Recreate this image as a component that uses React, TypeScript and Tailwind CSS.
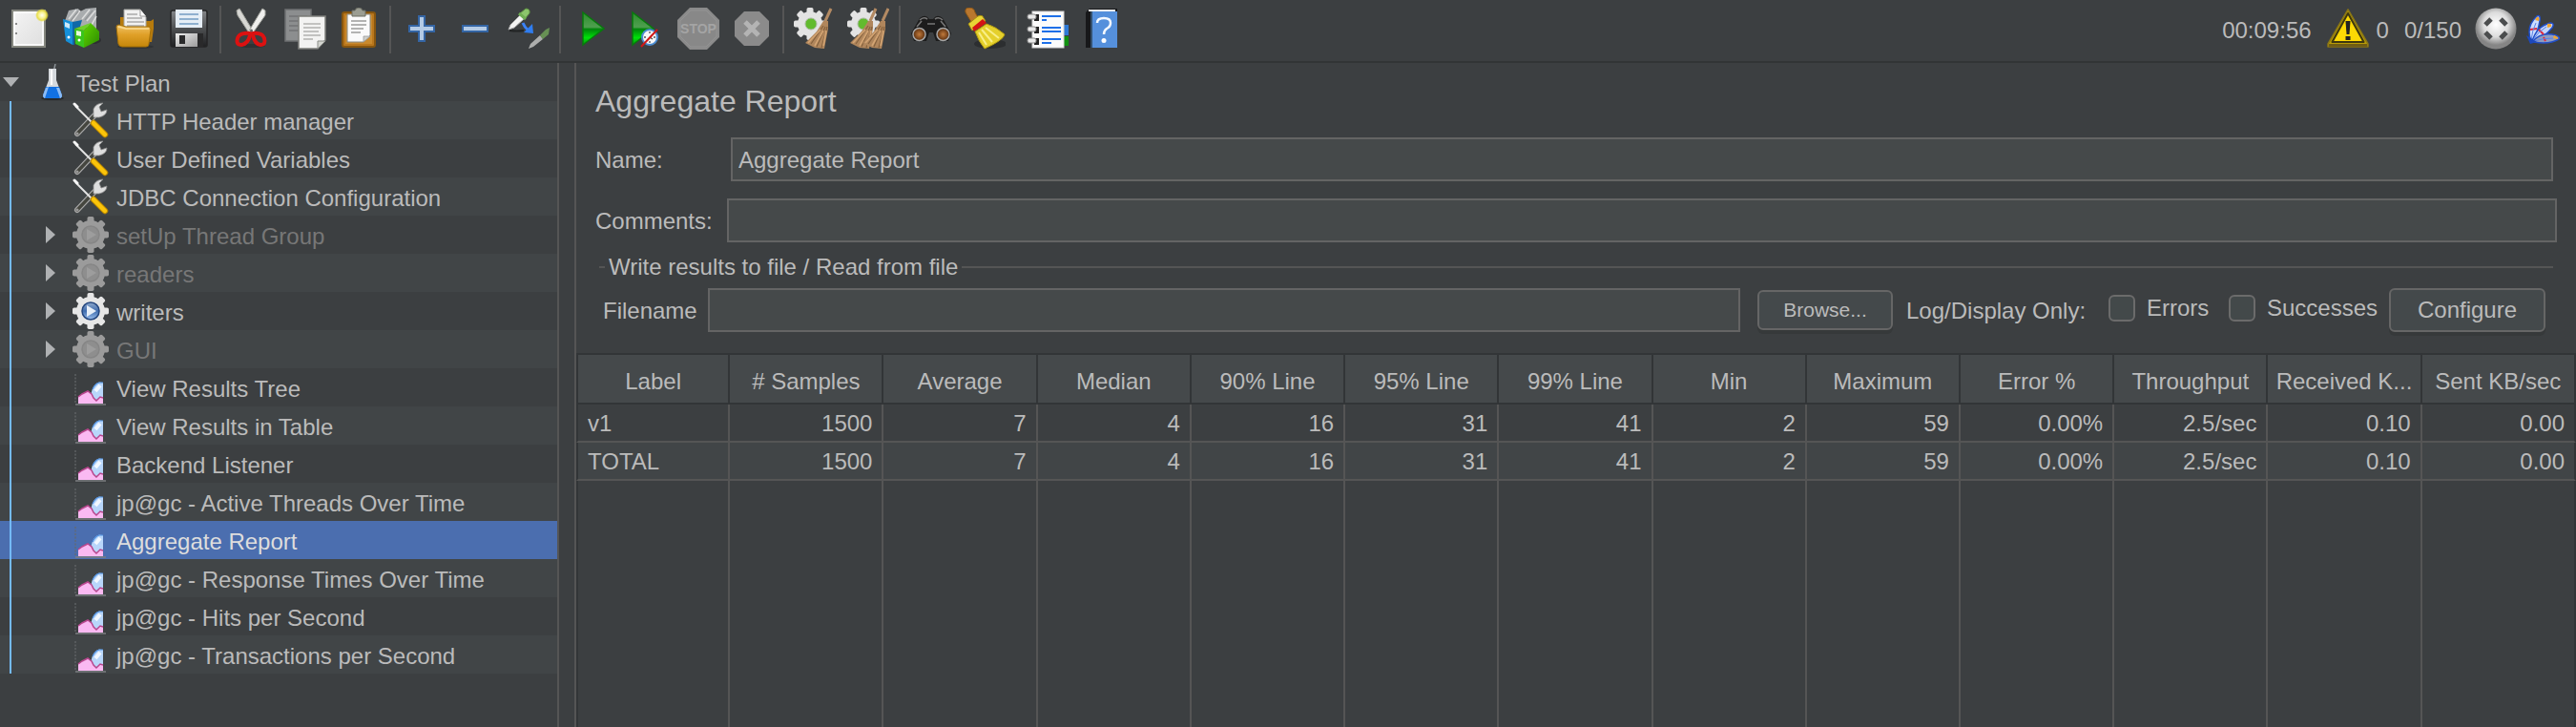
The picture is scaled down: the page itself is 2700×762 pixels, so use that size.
import React from "react";

function Svg({ children, className = "size-11", box = "0 0 44 44" }: { children: React.ReactNode; className?: string; box?: string }) {
  return (
    <svg viewBox={box} className={className} aria-hidden="true">
      {children}
    </svg>
  );
}

/* ---------- toolbar icons, drawn on a 44 unit grid ---------- */

function NewIcon() {
  return (
    <Svg>
      <defs>
        <linearGradient id="page" x1="0" y1="0" x2="1" y2="1">
          <stop offset="0" stopColor="#f4f4f4" />
          <stop offset="1" stopColor="#dedede" />
        </linearGradient>
        <radialGradient id="glow">
          <stop offset="0" stopColor="#fffff0" />
          <stop offset=".5" stopColor="#f6f08a" />
          <stop offset=".75" stopColor="#e6dc3c" stopOpacity=".9" />
          <stop offset="1" stopColor="#e6dc3c" stopOpacity="0" />
        </radialGradient>
      </defs>
      <rect x="5" y="3" width="34" height="38" fill="url(#page)" stroke="#85877f" strokeWidth="2" />
      <rect x="7" y="5" width="30" height="34" fill="none" stroke="#fff" strokeWidth="1.5" />
      <rect x="8" y="16" width="2" height="2" fill="#888" />
      <rect x="8" y="26" width="2" height="2" fill="#888" />
      <circle cx="36" cy="8" r="7" fill="url(#glow)" />
    </Svg>
  );
}

function TemplatesIcon() {
  return (
    <Svg>
      <defs>
        <linearGradient id="grn" x1="0" y1="0" x2="1" y2="1">
          <stop offset="0" stopColor="#5fd400" />
          <stop offset="1" stopColor="#2c8a00" />
        </linearGradient>
      </defs>
      <ellipse cx="34" cy="34" rx="8" ry="4" fill="#2d2f31" />
      <path d="M4 14 L8 3 L18 1 L20 4 L26 1 L37 0 L37 22 L20 20 L6 18Z" fill="#a9acae" />
      <path d="M8 12 L16 2 M12 14 L20 3 M22 12 L30 2 M27 14 L36 3 M32 18 L37 9" stroke="#dcdcdc" strokeWidth="1.6" />
      <path d="M10 14 L18 4 M25 13 L33 3" stroke="#8e9194" strokeWidth="1.2" />
      <path d="M2 12 L12 15 V39 L5 35 Z" fill="#1590da" />
      <path d="M12 15 L22 13 L20 20 L14 22 V39 L12 39Z" fill="#0f68a8" />
      <path d="M4 15 L9 17 V22 L4 20Z" fill="#cbe8f9" />
      <circle cx="8" cy="31" r="1.5" fill="#fff" />
      <path d="M14 22 L24 24 V42 L15 38Z" fill="#39c51c" />
      <path d="M24 24 L31 16 L40 25 V34 L24 42Z" fill="url(#grn)" />
      <path d="M14 22 L20 20 L31 16 L24 24Z" fill="#6fd02a" />
      <path d="M16 24 L21 25 V30 L16 29Z" fill="#e4f9dd" />
      <circle cx="19" cy="34" r="1.5" fill="#fff" />
    </Svg>
  );
}

function OpenIcon() {
  return (
    <Svg>
      <defs>
        <linearGradient id="fold" x1="0" y1="0" x2="0" y2="1">
          <stop offset="0" stopColor="#f0c468" />
          <stop offset=".45" stopColor="#e0a028" />
          <stop offset="1" stopColor="#c4860a" />
        </linearGradient>
      </defs>
      <ellipse cx="22" cy="41" rx="19" ry="2" fill="#303335" />
      <path d="M6 10 H14 V14 H38 L41 12 V22 L39 36 H6Z" fill="#b67a0c" />
      <path d="M10 2 H27 L33 10 V24 H10Z" fill="#f1f1f1" stroke="#a5a5a2" />
      <path d="M27 2 V9 H33" fill="#fff" stroke="#999" />
      <path d="M13 7 H24 M13 11 H29 M13 15 H31 M13 19 H31" stroke="#aaa" strokeWidth="1.6" />
      <path d="M2 20 Q2 18 5 18 L12 20 H36 Q38 20 38 23 L36 38 Q36 41 33 41 H8 Q5 41 4 38Z" fill="url(#fold)" stroke="#a36f07" />
      <path d="M4 20 L12 22 H36" fill="none" stroke="#fbdc94" strokeWidth="1.5" />
    </Svg>
  );
}

function SaveIcon() {
  return (
    <Svg>
      <defs>
        <linearGradient id="flop" x1="0" y1="0" x2="0" y2="1">
          <stop offset="0" stopColor="#85878a" />
          <stop offset=".5" stopColor="#4e5052" />
          <stop offset="1" stopColor="#1f2022" />
        </linearGradient>
        <linearGradient id="metal" x1="0" y1="0" x2="1" y2="1">
          <stop offset="0" stopColor="#eee" />
          <stop offset="1" stopColor="#9c9c9c" />
        </linearGradient>
      </defs>
      <rect x="3" y="3" width="38" height="38" rx="2" fill="url(#flop)" stroke="#242526" strokeWidth="1.5" />
      <rect x="8" y="2" width="28" height="19" fill="#e6eef6" />
      <path d="M12 7 H32 M12 12 H32 M12 17 H32" stroke="#8fb0cf" strokeWidth="1.8" />
      <rect x="8" y="27" width="23" height="14" fill="url(#metal)" />
      <rect x="12" y="29" width="6" height="9" fill="#2a2a2b" />
      <rect x="31" y="27" width="6" height="14" fill="#29292a" />
    </Svg>
  );
}

function CutIcon() {
  return (
    <Svg>
      <ellipse cx="22" cy="40" rx="14" ry="2" fill="#2f3234" />
      <path d="M6 3 L9 1 L24 26 L20 28 L7 8Z" fill="#d7d7d4" stroke="#a0a29c" />
      <path d="M36 3 L33 1 L18 26 L22 28 L36 8Z" fill="#efefed" stroke="#a0a29c" />
      <path d="M20 27 Q9 26 7 32 Q5 39 11 39 Q18 38 20 29Z" fill="none" stroke="#dd1111" strokeWidth="4" />
      <path d="M23 27 Q33 26 35 32 Q37 39 31 39 Q25 38 23 29Z" fill="none" stroke="#dd1111" strokeWidth="4" />
      <circle cx="21.5" cy="24" r="1.5" fill="#666" />
    </Svg>
  );
}

function CopyIcon() {
  return (
    <Svg>
      <rect x="1" y="2" width="27" height="33" fill="#8c8e8f" stroke="#6e7072" strokeWidth="1.5" />
      <path d="M5 9 H24 M5 14 H24 M5 19 H24 M5 24 H20" stroke="#717375" strokeWidth="1.6" />
      <path d="M15 9 H43 V34 L35 43 H15Z" fill="#f3f3f2" stroke="#7d7f7b" strokeWidth="1.5" />
      <path d="M35 43 V35 H43Z" fill="#d2d4cf" stroke="#8b8d88" />
      <path d="M20 17 H38 M20 21 H38 M20 25 H36 M20 29 H38 M20 33 H30" stroke="#b2b2b0" strokeWidth="1.6" />
    </Svg>
  );
}

function PasteIcon() {
  return (
    <Svg>
      <rect x="5" y="5" width="34" height="36" rx="2" fill="#b9761c" stroke="#87560f" strokeWidth="2" />
      <rect x="8" y="8" width="28" height="30" fill="#c98a2e" />
      <path d="M10 7 H34 V29 L27 36 H10Z" fill="#fafafa" stroke="#888a85" />
      <path d="M27 36 V30 H34Z" fill="#cfd1cc" stroke="#999" strokeWidth=".8" />
      <path d="M14 14 H30 M14 18 H30 M14 22 H27 M14 26 H24" stroke="#9c9c9a" strokeWidth="1.6" />
      <path d="M15 3 H18 Q19 0 22 0 Q25 0 26 3 H29 V9 H15Z" fill="#9b9d92" stroke="#6a6c62" />
    </Svg>
  );
}

function PlusIcon() {
  return (
    <Svg>
      <path d="M19 9 H25 V19 H35 V25 H25 V35 H19 V25 H9 V19 H19Z" fill="#b4cbe6" stroke="#3465a4" strokeWidth="2" />
    </Svg>
  );
}

function MinusIcon() {
  return (
    <Svg>
      <rect x="9" y="19" width="26" height="6" fill="#b4cbe6" stroke="#3465a4" strokeWidth="2" />
    </Svg>
  );
}

function ToggleIcon() {
  return (
    <Svg>
      <path d="M2 24 Q10 25 17 24" stroke="#222425" strokeWidth="2" fill="none" />
      <path d="M1 23 L3 18 L13 8 L17 12 L7 21Z" fill="#f3f3f3" stroke="#a7a7a7" />
      <path d="M13 6 L19 1 Q24 1 23 6 L18 12Z" fill="#8cc56c" stroke="#5a8a40" />
      <path d="M12 6 L19 12" stroke="#6fae52" strokeWidth="3" />
      <path d="M16 16 Q18 21 22 24" fill="none" stroke="#3b82f6" strokeWidth="3" />
      <path d="M26 17 L27 27 L17 26Z" fill="#2f7df0" />
      <path d="M22 43 L24 38 L34 29 L37 33 L27 41Z" fill="#b9bab9" opacity=".9" />
      <path d="M34 29 L40 23 L44 21 L43 28 L37 33Z" fill="#6f9f58" opacity=".85" />
    </Svg>
  );
}

function PlayShape() {
  return (
    <>
      <defs>
        <linearGradient id="play" x1="0" y1="0" x2="0" y2="1">
          <stop offset="0" stopColor="#2c8d2c" />
          <stop offset=".45" stopColor="#4f9f4f" />
          <stop offset=".52" stopColor="#00850a" />
          <stop offset=".78" stopColor="#00e00a" />
          <stop offset="1" stopColor="#029a08" />
        </linearGradient>
      </defs>
      <path d="M13 5 L35 22 L13 39Z" fill="url(#play)" stroke="#077a0c" strokeWidth="1.5" />
    </>
  );
}

function PlayIcon() {
  return (
    <Svg>
      <PlayShape />
    </Svg>
  );
}

function PlayNoTimersIcon() {
  return (
    <Svg>
      <g transform="translate(-4 0)">
        <PlayShape />
      </g>
      <circle cx="27" cy="31" r="8" fill="#f7f7f7" stroke="#4a8bd0" strokeWidth="2" />
      <path d="M27 25 V27 M27 35 V37 M21 31 H23 M31 31 H33 M27 31 L30 33" stroke="#555" strokeWidth="1.3" />
      <path d="M18 41 L35 23" stroke="#d01818" strokeWidth="2" />
    </Svg>
  );
}

function StopIcon() {
  return (
    <Svg>
      <path d="M13 0 H31 L44 13 V31 L31 44 H13 L0 31 V13Z" fill="#8b8b8b" />
      <path d="M14 3 H30 L41 14 V30 L30 41 H14 L3 30 V14Z" fill="#888" stroke="#929292" />
      <text x="22" y="27" textAnchor="middle" fontFamily="Liberation Sans Narrow, Liberation Sans, sans-serif" fontWeight="bold" fontSize="14" fill="#a4a4a4">
        STOP
      </text>
    </Svg>
  );
}

function ShutdownIcon() {
  return (
    <Svg>
      <path d="M14 4 H30 L40 14 V30 L30 40 H14 L4 30 V14Z" fill="#8b8b8b" />
      <path d="M15 15 L29 29 M29 15 L15 29" stroke="#b4b4b4" strokeWidth="5" />
    </Svg>
  );
}

function gearTeeth(cx: number, cy: number, r: number, w: number) {
  return [0, 45, 90, 135].map((a) => (
    <rect key={a} x={cx - w / 2} y={cy - r} width={w} height={r * 2} rx={w / 4} transform={`rotate(${a} ${cx} ${cy})`} />
  ));
}

function BroomHead({ dx = 0 }: { dx?: number }) {
  return (
    <g transform={`translate(${dx} 0)`}>
      <path d="M39 1 L33 14" stroke="#b38a63" strokeWidth="3" />
      <path d="M31 14 L36 14 L36 22 L32 43 L22 42 L12 37 L24 25Z" fill="#b0865c" />
      <path d="M31 19 L18 38 M33 20 L24 41 M35 20 L29 42" stroke="#86623e" strokeWidth="1.2" />
      <path d="M28 23 L15 37 M31 24 L22 40 M34 24 L31 40" stroke="#d3a473" strokeWidth="1.6" />
    </g>
  );
}

function ClearIcon() {
  return (
    <Svg>
      <g fill="#e3e3e3">
        {gearTeeth(17, 17, 17, 7)}
        <circle cx="17" cy="17" r="13" />
      </g>
      <circle cx="18" cy="17" r="6" fill="#62bb2e" stroke="#a9b8a0" />
      <BroomHead />
    </Svg>
  );
}

function ClearAllIcon() {
  return (
    <Svg>
      <g fill="#e3e3e3">
        {gearTeeth(17, 17, 17, 7)}
        <circle cx="17" cy="17" r="13" />
      </g>
      <circle cx="17" cy="17" r="6" fill="#62bb2e" stroke="#a9b8a0" />
      <BroomHead dx={-9} />
      <BroomHead dx={4} />
    </Svg>
  );
}

function BinocularsIcon() {
  return (
    <Svg>
      <defs>
        <radialGradient id="lens">
          <stop offset="0" stopColor="#c07a3c" />
          <stop offset="1" stopColor="#5a2d0c" />
        </radialGradient>
      </defs>
      <path d="M1 27 L10 11 Q16 6 20 12 H24 Q28 6 34 11 L43 27 L40 35 H27 L24 26 H20 L17 35 H4Z" fill="#1c1c1c" />
      <path d="M10 13 Q14 9 18 12 M26 12 Q30 9 34 13 M18 17 H26 M7 20 L12 14 M37 20 L32 14" stroke="#777" strokeWidth="1.6" fill="none" />
      <circle cx="9.5" cy="28" r="6.5" fill="url(#lens)" stroke="#a5a5a5" strokeWidth="1.5" />
      <circle cx="34.5" cy="28" r="6.5" fill="url(#lens)" stroke="#a5a5a5" strokeWidth="1.5" />
    </Svg>
  );
}

function BroomIcon() {
  return (
    <Svg>
      <ellipse cx="28" cy="38" rx="17" ry="5" fill="#2c2e30" />
      <path d="M2 5 Q1 0 6 0 Q11 0 12 5 L16 12 L8 15Z" fill="#b9772e" stroke="#8d5715" />
      <path d="M5 17 L15 9 Q20 7 21 11 L23 14 L9 24Z" fill="#e8d435" stroke="#a58f10" />
      <path d="M9 21 L20 12 L24 16 L11 25Z" fill="#d41414" />
      <path d="M12 25 L24 17 Q34 20 43 28 Q42 34 22 43 Q16 36 12 25Z" fill="#e5d02c" stroke="#ae980f" />
      <path d="M16 26 L24 39 M19 23 L30 36 M23 21 L37 32" stroke="#f8ee88" strokeWidth="2" />
    </Svg>
  );
}

function LogIcon() {
  return (
    <Svg>
      <rect x="36" y="18" width="8" height="11" fill="#2f7ad6" />
      <rect x="36" y="30" width="8" height="10" fill="#109010" />
      <rect x="6" y="4" width="33" height="38" fill="#fbfbfb" stroke="#d5d5d5" />
      <path d="M16 9 H36 M16 13 H21 M16 21 H36 M16 25 H36 M16 33 H36 M16 37 H26" stroke="#1d6fe8" strokeWidth="2" />
      {[7, 20, 32].map((y) => (
        <g key={y}>
          <rect x="8" y={y} width="5" height="7" fill="#222" />
          <rect x="1" y={y} width="9" height="5" rx="2" fill="#e9e9e9" stroke="#8a8a8a" />
        </g>
      ))}
    </Svg>
  );
}

function HelpIcon() {
  return (
    <Svg>
      <path d="M6 5 L10 1 H39 V42 H6Z" fill="#17181a" />
      <path d="M9 3 H37" stroke="#f0f0f0" strokeWidth="2" />
      <rect x="12" y="4" width="27" height="38" fill="#5590dc" />
      <path d="M12 4 V42" stroke="#34516f" strokeWidth="2" />
      <path d="M18 16 Q18 11 25 11 Q32 11 32 16 Q32 20 28 22 Q25 24 25 28" fill="none" stroke="#f3f8ff" strokeWidth="2.5" />
      <circle cx="25" cy="34.5" r="2.5" fill="#fff" />
    </Svg>
  );
}

function WarningIcon() {
  return (
    <Svg>
      <path d="M22 2 L43 38 V41 H1 V38Z" fill="#b89b06" stroke="#8a7614" strokeWidth="1.5" strokeLinejoin="round" />
      <path d="M22 6 L38.5 36 H5.5Z" fill="#fcd904" stroke="#3d370f" strokeWidth="2" strokeLinejoin="round" />
      <path d="M2 39.5 H42" stroke="#6f5c14" strokeWidth="3" />
      <path d="M19.5 14 H24.5 L23.5 28 H20.5Z" fill="#222" />
      <rect x="19.5" y="30" width="5" height="4" fill="#222" />
    </Svg>
  );
}

function ServerIcon() {
  return (
    <Svg>
      <defs>
        <radialGradient id="ball" cx=".5" cy=".4">
          <stop offset="0" stopColor="#fff" />
          <stop offset=".6" stopColor="#dcdcdc" />
          <stop offset="1" stopColor="#858585" />
        </radialGradient>
      </defs>
      <circle cx="22" cy="22" r="21.5" fill="url(#ball)" />
      <g stroke="#4b4d4e" strokeWidth="5">
        <path d="M11 18 L17 12 M33 18 L27 12 M11 26 L17 32 M33 26 L27 32" />
      </g>
    </Svg>
  );
}

function FeatherIcon() {
  return (
    <Svg className="h-11 w-10" box="0 0 40 44">
      <path d="M5 35 Q-1 20 11 9 Q15 7 14 14 Q12 26 6 35Z" fill="#ccdcff" stroke="#2350c8" strokeWidth="1.5" />
      <path d="M6 36 Q10 20 25 16 Q30 16 27 21 Q20 30 8 36Z" fill="#c4d5fb" stroke="#2350c8" strokeWidth="1.5" />
      <path d="M6 36 Q14 26 27 28 Q36 30 34 33 Q24 39 8 36Z" fill="#8f9cc0" stroke="#2350c8" strokeWidth="1.5" />
      <path d="M11 10 Q14 9 13 14 L9 13Z M22 17 Q27 16 26 20 L22 21Z M29 29 Q34 31 33 33 L28 32Z" fill="#f2a52c" />
      <path d="M4 23 L11 22 M13 23 L18 28 M18 31 L20 35" stroke="#e02a3c" strokeWidth="2" />
      <path d="M5 34 Q6 24 10 16 M7 34 Q12 25 21 20 M8 35 Q18 32 28 32" stroke="#5c83e8" fill="none" />
      <path d="M0 29 L11 36 L4 38Z" fill="#1d49be" />
    </Svg>
  );
}

/* ---------- tree icons, drawn on a 38 unit grid ---------- */

function FlaskIcon() {
  return (
    <Svg className="size-[38px]" box="0 0 38 38">
      <ellipse cx="19" cy="36" rx="12" ry="2" fill="#27292b" />
      <path d="M22 0 L20 9" stroke="#8b9196" strokeWidth="1.5" />
      <path d="M15 5 H23 V17 L29 33 Q29 36 26 36 H12 Q9 36 9 33 L15 17Z" fill="#d5d9dd" />
      <path d="M12 24 H26 L29 33 Q29 36 26 36 H12 Q9 36 9 33Z" fill="#1271e2" />
      <path d="M12 25 L9 33 Q9 35 11 36 L15 24Z M26 25 L29 33 Q29 35 27 36 L23 25Z" fill="#8dbcf4" />
      <path d="M18 6 V22" stroke="#fff" strokeWidth="2" />
    </Svg>
  );
}

function ToolsIcon() {
  return (
    <Svg className="size-[38px]" box="0 0 38 38">
      <path d="M5 33 L23 14" stroke="#a9a9a9" strokeWidth="6" strokeLinecap="round" />
      <path d="M5 33 L22 15" stroke="#45463f" strokeWidth="3.5" strokeLinecap="round" />
      <circle cx="5" cy="33" r="1.6" fill="#999" />
      <path d="M22 16 L22 7 Q25 1 32 1 L28 5 L30 10 L36 8 Q36 14 28 16Z" fill="#dedede" stroke="#8b8b8b" strokeWidth=".8" />
      <path d="M3 4 L20 21" stroke="#e4e4e4" strokeWidth="2" />
      <path d="M2 2 L5 5" stroke="#f6f6f6" strokeWidth="3" strokeLinecap="round" />
      <path d="M22 22 L34 34" stroke="#b88600" strokeWidth="6.5" strokeLinecap="round" />
      <path d="M22 22 L34 34" stroke="#fbc40a" strokeWidth="4.5" strokeLinecap="round" />
    </Svg>
  );
}

function GearIcon({ enabled }: { enabled: boolean }) {
  return (
    <Svg className="size-[38px]" box="0 0 38 38">
      <defs>
        <linearGradient id="hub" x1="0" y1="0" x2="0" y2="1">
          <stop offset="0" stopColor="#8fa9cc" />
          <stop offset=".5" stopColor="#3f6cae" />
          <stop offset="1" stopColor="#9cc0ee" />
        </linearGradient>
      </defs>
      <g fill={enabled ? "#e6e6e6" : "#9b9b9b"}>
        {gearTeeth(19, 19, 19, 7)}
        <circle cx="19" cy="19" r="15" />
      </g>
      <circle cx="19" cy="19" r="9" fill={enabled ? "url(#hub)" : "#8e8e8e"} stroke={enabled ? "#24467f" : "#868686"} strokeWidth="1.5" />
      <path d="M15 13 L25 19 L15 25Z" fill={enabled ? "#e6eef8" : "#9d9d9d"} />
    </Svg>
  );
}

function ChartIcon() {
  return (
    <Svg className="size-[38px]" box="0 0 38 38">
      <path d="M3 5 V36" stroke="#66696c" strokeWidth="1.2" strokeDasharray="2 1.5" />
      <path d="M3 37 H35" stroke="#7d7f82" strokeWidth="1.5" />
      <path d="M19 28 Q21 15 28 13.5 L32 14 V33 H22Z" fill="#b8d6fa" />
      <path d="M21 21 Q24 15 28 14 L32 14" fill="none" stroke="#4d8fe0" strokeWidth="1.2" />
      <path d="M24 23 L29 17" stroke="#f2f8ff" strokeWidth="4" />
      <path d="M6 29 L10 26 L16 23 L20 26 L22 30 L25 33 L29 29 L32 30 V36 H6Z" fill="#fab9f2" />
      <path d="M6 29 L10 26 L16 23 L20 26 L22 30 L25 33 L29 29 L32 30" fill="none" stroke="#b8478e" strokeWidth="1.5" />
    </Svg>
  );
}

/* ---------- toolbar ---------- */

const toolGroups: { label: string; icon: React.FC; disabled?: boolean }[][] = [
  [
    { label: "New", icon: NewIcon },
    { label: "Templates", icon: TemplatesIcon },
    { label: "Open", icon: OpenIcon },
    { label: "Save", icon: SaveIcon },
  ],
  [
    { label: "Cut", icon: CutIcon },
    { label: "Copy", icon: CopyIcon },
    { label: "Paste", icon: PasteIcon },
  ],
  [
    { label: "Expand all", icon: PlusIcon },
    { label: "Collapse all", icon: MinusIcon },
    { label: "Toggle", icon: ToggleIcon },
  ],
  [
    { label: "Start", icon: PlayIcon },
    { label: "Start no pauses", icon: PlayNoTimersIcon },
    { label: "Stop", icon: StopIcon, disabled: true },
    { label: "Shutdown", icon: ShutdownIcon, disabled: true },
  ],
  [
    { label: "Clear", icon: ClearIcon },
    { label: "Clear all", icon: ClearAllIcon },
  ],
  [
    { label: "Search", icon: BinocularsIcon },
    { label: "Reset search", icon: BroomIcon },
  ],
  [
    { label: "Function helper", icon: LogIcon },
    { label: "Help", icon: HelpIcon },
  ],
];

function Toolbar() {
  return (
    <header className="flex h-[66px] shrink-0 items-start border-b-2 border-[#323536] pr-3">
      <div role="toolbar" aria-label="Main" className="flex pl-0.5">
        {toolGroups.map((group, i) => (
          <div key={group[0].label} className="flex">
            {i > 0 && <div className="mx-1 mt-1.5 h-[50px] w-0.5 bg-[#555555]" />}
            {group.map(({ label, icon: Icon, disabled }) => (
              <button key={label} type="button" aria-label={label} disabled={disabled} className="flex h-[60px] w-14 items-center justify-center">
                <Icon />
              </button>
            ))}
          </div>
        ))}
      </div>
      <div className="ml-auto flex h-[60px] items-center">
        <span className="mr-4 pt-1">00:09:56</span>
        <button type="button" aria-label="Errors in log">
          <WarningIcon />
        </button>
        <span className="ml-2 mr-4 pt-1">0</span>
        <span className="mr-3.5 pt-1">0/150</span>
        <ServerIcon />
        <span className="ml-2.5">
          <FeatherIcon />
        </span>
      </div>
    </header>
  );
}

/* ---------- test plan tree ---------- */

type Node = { name: string; kind: "config" | "group" | "listener"; off?: boolean };

const nodes: Node[] = [
  { name: "HTTP Header manager", kind: "config" },
  { name: "User Defined Variables", kind: "config" },
  { name: "JDBC Connection Configuration", kind: "config" },
  { name: "setUp Thread Group", kind: "group", off: true },
  { name: "readers", kind: "group", off: true },
  { name: "writers", kind: "group" },
  { name: "GUI", kind: "group", off: true },
  { name: "View Results Tree", kind: "listener" },
  { name: "View Results in Table", kind: "listener" },
  { name: "Backend Listener", kind: "listener" },
  { name: "jp@gc - Active Threads Over Time", kind: "listener" },
  { name: "Aggregate Report", kind: "listener" },
  { name: "jp@gc - Response Times Over Time", kind: "listener" },
  { name: "jp@gc - Hits per Second", kind: "listener" },
  { name: "jp@gc - Transactions per Second", kind: "listener" },
];

function Tree({ selected }: { selected: string }) {
  return (
    <nav aria-label="Test plan" className="w-[586px] shrink-0 border-r-2 border-[#555555]">
      <ul role="tree">
        <li role="treeitem" aria-expanded="true" aria-selected="false">
          <div className="flex h-10 items-center">
            <button type="button" aria-label="Collapse Test Plan" className="mr-4 pl-[3px]">
              <svg viewBox="0 0 17 10" className="h-2.5 w-[17px]" aria-hidden="true">
                <path d="M0 0 H17 L8.5 10Z" fill="#afb1b3" />
              </svg>
            </button>
            <FlaskIcon />
            <span className="ml-1.5 pt-1">Test Plan</span>
          </div>
          <ul role="group">
            {nodes.map((n) => (
              <li
                key={n.name}
                role="treeitem"
                aria-selected={n.name === selected}
                className={n.name === selected ? "flex h-10 items-center bg-[#4b6eaf] text-[#dddddd]" : "flex h-10 items-center odd:bg-[#414547]"}
              >
                <span className="ml-2.5 w-0.5 self-stretch bg-[#74baf8]" />
                <span className="flex w-16 justify-center pl-[18px]">
                  {n.kind === "group" && (
                    <button type="button" aria-label={"Expand " + n.name}>
                      <svg viewBox="0 0 10 18" className="h-[18px] w-2.5" aria-hidden="true">
                        <path d="M0 0 L10 9 L0 18Z" fill="#afb1b3" />
                      </svg>
                    </button>
                  )}
                </span>
                {n.kind === "config" && <ToolsIcon />}
                {n.kind === "group" && <GearIcon enabled={!n.off} />}
                {n.kind === "listener" && <ChartIcon />}
                <span className={n.off ? "ml-2 pt-1 text-[#777777]" : "ml-2 pt-1"}>{n.name}</span>
              </li>
            ))}
          </ul>
        </li>
      </ul>
    </nav>
  );
}

/* ---------- aggregate report ---------- */

const columns = ["Label", "# Samples", "Average", "Median", "90% Line", "95% Line", "99% Line", "Min", "Maximum", "Error %", "Throughput", "Received K...", "Sent KB/sec"];

const rows = [
  ["v1", "1500", "7", "4", "16", "31", "41", "2", "59", "0.00%", "2.5/sec", "0.10", "0.00"],
  ["TOTAL", "1500", "7", "4", "16", "31", "41", "2", "59", "0.00%", "2.5/sec", "0.10", "0.00"],
];

const field = "h-[46px] min-w-0 flex-1 border-2 border-[#646464] bg-[#45494a] px-1.5 pt-0.5 text-[#bbbbbb] outline-none";
const button = "rounded-md border-2 border-[#666666] bg-[#44494b] shadow-[0_4px_0_#36393a]";
const check = "size-7 appearance-none rounded-md border-2 border-[#6b6b6b] bg-[#43494a]";

function ResultsTable() {
  return (
    <table className="w-full table-fixed border-separate border-spacing-0">
      <thead>
        <tr className="h-[54px] bg-[#45494b]">
          {columns.map((c) => (
            <th key={c} scope="col" className="h-[54px] truncate border-y-2 border-r-2 border-[#323537] pt-1.5 text-center font-normal first:border-l-2">
              {c}
            </th>
          ))}
        </tr>
      </thead>
      <tbody>
        {rows.map((r) => (
          <tr key={r[0]} className="h-10 even:bg-[#414547]">
            {r.map((v, i) => (
              <td
                key={columns[i]}
                className="h-10 border-b-2 border-r-2 border-[#555555] px-2.5 pt-0.5 text-right first:border-l-2 first:border-l-[#323537] first:text-left last:border-r-[#323537]"
              >
                {v}
              </td>
            ))}
          </tr>
        ))}
        <tr>
          {columns.map((c) => (
            <td key={c} className="border-r-2 border-[#555555] first:border-l-2 first:border-l-[#323537] last:border-r-[#323537]" />
          ))}
        </tr>
      </tbody>
    </table>
  );
}

function Report() {
  return (
    <main className="ml-4 flex min-w-0 flex-1 flex-col border-l-2 border-[#555555]">
      <h1 className="mt-5 pl-5 text-[32px] leading-10">Aggregate Report</h1>
      <div className="mt-[18px] flex items-center pl-5 pr-6">
        <label htmlFor="name" className="w-[142px] pt-0.5">
          Name:
        </label>
        <input id="name" defaultValue="Aggregate Report" className={field} />
      </div>
      <div className="mt-[18px] flex items-center pl-5 pr-5">
        <label htmlFor="comments" className="w-[138px] pt-0.5">
          Comments:
        </label>
        <input id="comments" className={field} />
      </div>
      <section aria-labelledby="file-title">
        <div className="mt-3 flex items-center gap-1 pl-6 pr-6">
          <span className="h-0.5 w-1.5 bg-[#555555]" />
          <h2 id="file-title">Write results to file / Read from file</h2>
          <span className="h-0.5 flex-1 bg-[#555555]" />
        </div>
        <div className="mt-2 flex items-center pl-7 pr-8">
          <label htmlFor="filename" className="w-[110px] pt-0.5">
            Filename
          </label>
          <input id="filename" className={field} />
          <button type="button" className={button + " ml-[18px] h-[42px] w-[142px] text-[21px]"}>
            Browse...
          </button>
          <span className="ml-3.5 w-[212px] pt-0.5">Log/Display Only:</span>
          <label className="mb-1 flex w-[126px] items-center gap-3">
            <input type="checkbox" className={check} />
            Errors
          </label>
          <label className="mb-1 flex w-[168px] items-center gap-3">
            <input type="checkbox" className={check} />
            Successes
          </label>
          <button type="button" className={button + " h-[46px] w-[164px]"}>
            Configure
          </button>
        </div>
      </section>
      <div className="mt-[22px] flex flex-1">
        <ResultsTable />
      </div>
    </main>
  );
}

export default function App() {
  return (
    <div className="flex h-screen flex-col overflow-hidden bg-[#3c3f41] font-['Liberation_Sans',Arial,sans-serif] text-[24px] leading-7 text-[#bbbbbb]">
      <Toolbar />
      <div className="flex min-h-0 flex-1">
        <Tree selected="Aggregate Report" />
        <Report />
      </div>
    </div>
  );
}
